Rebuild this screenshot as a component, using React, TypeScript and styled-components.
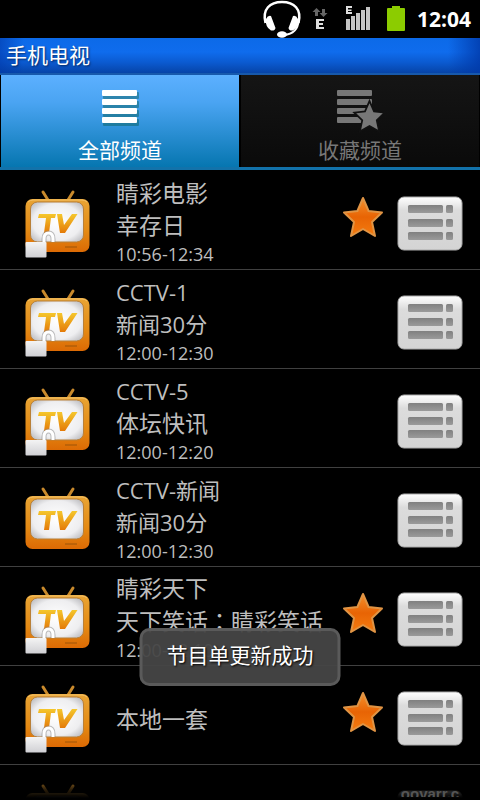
import React from "react";
import styled, { createGlobalStyle } from "styled-components";

const Global = createGlobalStyle`
  * { box-sizing: border-box; }
  body { margin: 0; background: #000; font-family: "Open Sans", "Noto Sans CJK SC", sans-serif; }
  button { border: 0; padding: 0; margin: 0; background: none; font: inherit; color: inherit; cursor: pointer; }
`;

const Screen = styled.div`
  position: relative;
  display: flex;
  flex-direction: column;
  height: 100vh;
  overflow: hidden;
  background: #000;
`;

const StatusBar = styled.div`
  flex: none;
  display: flex;
  align-items: center;
  justify-content: flex-end;
  height: 38px;
  padding-right: 9px;
  color: #fff;
  svg { display: block; }
`;

const Clock = styled.time`
  margin-left: 7px;
  font: 700 21px/38px "Open Sans", sans-serif;
`;

const TitleBar = styled.h1`
  flex: none;
  margin: 0;
  height: 37px;
  padding: 0 6px;
  color: #fff;
  font-size: 21px;
  font-weight: 400;
  line-height: 35px;
  text-shadow: 1px 1px 2px #0008;
  background:
    linear-gradient(90deg, #0038a899, #0038a800 24px calc(100% - 32px), #0038a8cc),
    linear-gradient(#0c6ae8, #0f6ced 40%, #0b5ad0 70%, #0644a8);
  border-bottom: 2px solid #1759ac;
`;

const Tabs = styled.div`
  flex: none;
  display: grid;
  grid-template-columns: 1fr 1fr;
  border-bottom: 3px solid #1272aa;
`;

const Tab = styled.button<{ $active?: boolean }>`
  && {
    display: flex;
    flex-direction: column;
    align-items: center;
    height: 92px;
    padding-top: 10px;
    margin: 0 1px;
    font-size: 21px;
    line-height: 32px;
    color: ${(p) => (p.$active ? "#fff" : "#777")};
    background: ${(p) =>
      p.$active ? "linear-gradient(#5cb0ff, #4aa4f2 30%, #0676b0)" : "linear-gradient(#151515, #0a0a0a)"};
  }
  svg { display: block; margin-bottom: 1px; }
`;

const ChannelList = styled.ul`
  position: relative;
  flex: 1;
  min-height: 0;
  overflow: hidden;
  list-style: none;
  margin: 0;
  padding: 1px 0 0;
  &::after {
    content: "";
    position: absolute;
    inset: auto 0 0;
    height: 24px;
    background: linear-gradient(#0000, #000c 14px, #000 22px);
    pointer-events: none;
  }
`;

const Row = styled.li`
  display: flex;
  align-items: center;
  height: 99px;
  padding: 0 16px 0 22px;
  border-bottom: 1px solid #404040;
`;

const Info = styled.div<{ $single: boolean }>`
  flex: 1;
  min-width: 0;
  margin-left: 22px;
  padding-top: ${(p) => (p.$single ? 8 : 3)}px;
  color: #bebebe;
  white-space: nowrap;
`;

const Name = styled.div<{ $mixed: boolean }>`
  font-size: ${(p) => (p.$mixed ? 22 : 23)}px;
  line-height: 32px;
`;

const Colon = styled.span`
  font-family: "Noto Sans CJK TC", sans-serif;
`;

const Time = styled.div`
  font-size: 18px;
  line-height: 26px;
`;

const StarButton = styled.button`
  && { flex: none; margin: 0 12px 6px 0; }
  svg { display: block; }
`;

const MenuButton = styled.button`
  && { flex: none; margin-top: 6px; }
  svg { display: block; }
`;

const Toast = styled.div`
  position: absolute;
  left: 50%;
  bottom: 114px;
  transform: translateX(-50%);
  padding: 10px 24px 14px;
  border: 3px solid #5a5a5a;
  border-radius: 10px;
  background: #464646f2;
  color: #fff;
  font-size: 21px;
  line-height: 28px;
  white-space: nowrap;
  text-shadow: 1px 1px 2px #000;
`;

const Watermark = styled.div`
  position: absolute;
  right: 18px;
  bottom: 3px;
  width: 64px;
  height: 10px;
  overflow: hidden;
  color: #555;
  font: 700 15px/14px "Liberation Sans", sans-serif;
  text-align: center;
`;

const STAR = "M20 1 L25.6 14 L39 15.5 L29 25 L32 39 L20 32 L8 39 L11 25 L1 15.5 L14.4 14 Z";

function StatusIcons() {
  return (
    <svg width="150" height="38" viewBox="260 0 150 38" aria-hidden="true">
      <path d="M265.500 23 C262 9 270 2 282 2 C294 2 302 9 298.500 23" fill="none" stroke="#fff" strokeWidth="2.500" />
      <path d="M298.500 21 C298 29 294 34 284 35" fill="none" stroke="#fff" strokeWidth="2" />
      <path d="M266 19 Q268 15 271 16 L275.500 28 Q275 31 271 30.500 Q265 27 266 19z M298 19 Q296 15 293 16 L288.500 28 Q289 31 293 30.500 Q299 27 298 19z" fill="#fff" />
      <ellipse cx="282" cy="34.500" rx="5" ry="3.300" fill="#fff" />
      <path d="M316.500 8 l4 4 h-2.500 v4 h-3 v-4 h-2.500z M323.500 17 l-4 -4 h2.500 v-4 h3 v4 h2.500z" fill="#666" />
      <path d="M316 19 h8 v2 h-5 v2 h4 v2 h-4 v2 h5 v2 h-8z M346 6 h6 v2 h-4 v1.500 h3.500 v1.500 h-3.500 v1 h4 v2 h-6z" fill="#ddd" />
      <path d="M346 19h4v11h-4z M351 16h4v14h-4z M356 13h4v17h-4z M361 10h4v20h-4z M366 7h4v23h-4z" fill="#c4c4c4" />
      <path d="M392 6h8v2h4q1 0 1 1v21q0 1-1 1h-16q-1 0-1-1v-21q0-1 1-1h4z" fill="#8ccc00" />
    </svg>
  );
}

function ListIcon() {
  return (
    <svg width="50" height="48" viewBox="0 0 50 48" aria-hidden="true">
      <g fill="#0546" transform="translate(1 2)">
        {[5, 14, 23, 32].map((y) => <rect key={y} x="7" y={y} width="36" height="7" rx="1" />)}
      </g>
      <g fill="#fff">
        {[5, 14, 23, 32].map((y) => <rect key={y} x="7" y={y} width="35" height="6" rx="1" />)}
      </g>
    </svg>
  );
}

function FavoriteListIcon() {
  return (
    <svg width="50" height="48" viewBox="0 0 50 48" aria-hidden="true">
      <g fill="#777">
        {[5, 14, 23, 32].map((y) => <rect key={y} x="2" y={y} width="35" height="6" rx="1" />)}
      </g>
      <path d={STAR} transform="translate(20.500 17.500) scale(.7)" fill="#777" stroke="#111" strokeWidth="5" paintOrder="stroke" />
    </svg>
  );
}

function TvIcon({ locked }: { locked: boolean }) {
  return (
    <svg width="72" height="76" viewBox="0 0 72 76" aria-hidden="true">
      <defs>
        <linearGradient id="body" x2="0" y2="1">
          <stop offset="0" stopColor="#e8a434" />
          <stop offset=".6" stopColor="#e48a14" />
          <stop offset="1" stopColor="#dc6a04" />
        </linearGradient>
        <radialGradient id="glass" r=".7">
          <stop offset="0" stopColor="#fff" />
          <stop offset=".65" stopColor="#eeeef0" />
          <stop offset="1" stopColor="#b0b0b4" />
        </radialGradient>
        <linearGradient id="letters" x2="0" y2="1">
          <stop offset="0" stopColor="#f5c72c" />
          <stop offset="1" stopColor="#e47a08" />
        </linearGradient>
        <linearGradient id="lock" x2="0" y2="1">
          <stop offset="0" stopColor="#f4f4f4" />
          <stop offset="1" stopColor="#d0d0d4" />
        </linearGradient>
      </defs>
      <path d="M21 10 L26 18 M51 10 L46 18" stroke="#c98a2c" strokeWidth="3" strokeLinecap="round" />
      <rect x="3.500" y="17" width="64" height="53" rx="7" fill="url(#body)" />
      <path d="M6 20 Q8 18 11 18 H60 Q63 18 65 20" fill="none" stroke="#f3c26a" strokeWidth="1" />
      <rect x="8.500" y="20" width="53" height="40" rx="7" fill="url(#glass)" stroke="#b98038" />
      <path d="M17 32 H34 L33 36 H29 L27 51 H22 L24 36 H16z M35 32 H40 L42 43 L50 32 H55.500 L43 51 H38z" fill="url(#letters)" />
      <path d="M43 65 h12" stroke="#9c5408" strokeWidth="1" />
      {locked && (
        <g>
          <path d="M22 60 V57 Q22 51 26.500 51 Q31 51 31 57 V60" fill="none" stroke="#8888" strokeWidth="5" />
          <path d="M22 60 V57 Q22 51 26.500 51 Q31 51 31 57 V60" fill="none" stroke="#fff" strokeWidth="3" />
          <rect x="3.500" y="60" width="21" height="15.500" rx="1" fill="url(#lock)" />
        </g>
      )}
    </svg>
  );
}

function StarIcon() {
  return (
    <svg width="42" height="42" viewBox="-1 -1 42 42" aria-hidden="true">
      <defs>
        <linearGradient id="starFill" x2="0" y2="1">
          <stop offset="0" stopColor="#f4902c" />
          <stop offset=".5" stopColor="#e86404" />
          <stop offset="1" stopColor="#f47c10" />
        </linearGradient>
      </defs>
      <path d={STAR} fill="url(#starFill)" stroke="#e09444" strokeWidth="2" strokeLinejoin="round" />
    </svg>
  );
}

function MenuIcon() {
  return (
    <svg width="68" height="58" viewBox="0 0 68 58" aria-hidden="true">
      <defs>
        <linearGradient id="plate" x2="0" y2="1">
          <stop offset="0" stopColor="#fff" />
          <stop offset=".25" stopColor="#dcdcdc" />
          <stop offset="1" stopColor="#d4d4d4" />
        </linearGradient>
        <linearGradient id="bar" x2="0" y2="1">
          <stop offset="0" stopColor="#808080" />
          <stop offset="1" stopColor="#9a9a9a" />
        </linearGradient>
      </defs>
      <rect x="2" y="3" width="64" height="53" rx="6" fill="url(#plate)" stroke="#aaa" />
      {[11, 25, 38].map((y) => (
        <g key={y} fill="url(#bar)">
          <rect x="12" y={y} width="35" height="8" rx="1.500" />
          <rect x="50" y={y} width="7" height="8" rx="1.500" />
        </g>
      ))}
    </svg>
  );
}

type Channel = { name: string; show?: string; time?: string; locked: boolean; favorite?: boolean };

const channels: Channel[] = [
  { name: "睛彩电影", show: "幸存日", time: "10:56-12:34", locked: true, favorite: true },
  { name: "CCTV-1", show: "新闻30分", time: "12:00-12:30", locked: true },
  { name: "CCTV-5", show: "体坛快讯", time: "12:00-12:20", locked: true },
  { name: "CCTV-新闻", show: "新闻30分", time: "12:00-12:30", locked: false },
  { name: "睛彩天下", show: "天下笑话：睛彩笑话", time: "12:00-12:10", locked: true, favorite: true },
  { name: "本地一套", locked: true, favorite: true },
  { name: "", locked: true },
];

function Label({ text }: { text: string }) {
  const [head, tail] = text.split("：");
  return (
    <Name $mixed={/[0-9A-Z]/.test(text)}>
      {head}
      {tail && <><Colon lang="zh-TW">：</Colon>{tail}</>}
    </Name>
  );
}

export default function App() {
  return (
    <Screen>
      <Global />
      <StatusBar>
        <StatusIcons />
        <Clock>12:04</Clock>
      </StatusBar>
      <TitleBar>手机电视</TitleBar>
      <Tabs role="tablist">
        <Tab role="tab" aria-selected="true" $active><ListIcon />全部频道</Tab>
        <Tab role="tab" aria-selected="false"><FavoriteListIcon />收藏频道</Tab>
      </Tabs>
      <ChannelList>
        {channels.map((c, i) => (
          <Row key={i}>
            <TvIcon locked={c.locked} />
            <Info $single={!c.show}>
              <Label text={c.name} />
              {c.show && <Label text={c.show} />}
              {c.time && <Time>{c.time}</Time>}
            </Info>
            {c.favorite && <StarButton aria-label="收藏"><StarIcon /></StarButton>}
            <MenuButton aria-label="节目单"><MenuIcon /></MenuButton>
          </Row>
        ))}
      </ChannelList>
      <Watermark>oovarr.c</Watermark>
      <Toast role="status">节目单更新成功</Toast>
    </Screen>
  );
}
